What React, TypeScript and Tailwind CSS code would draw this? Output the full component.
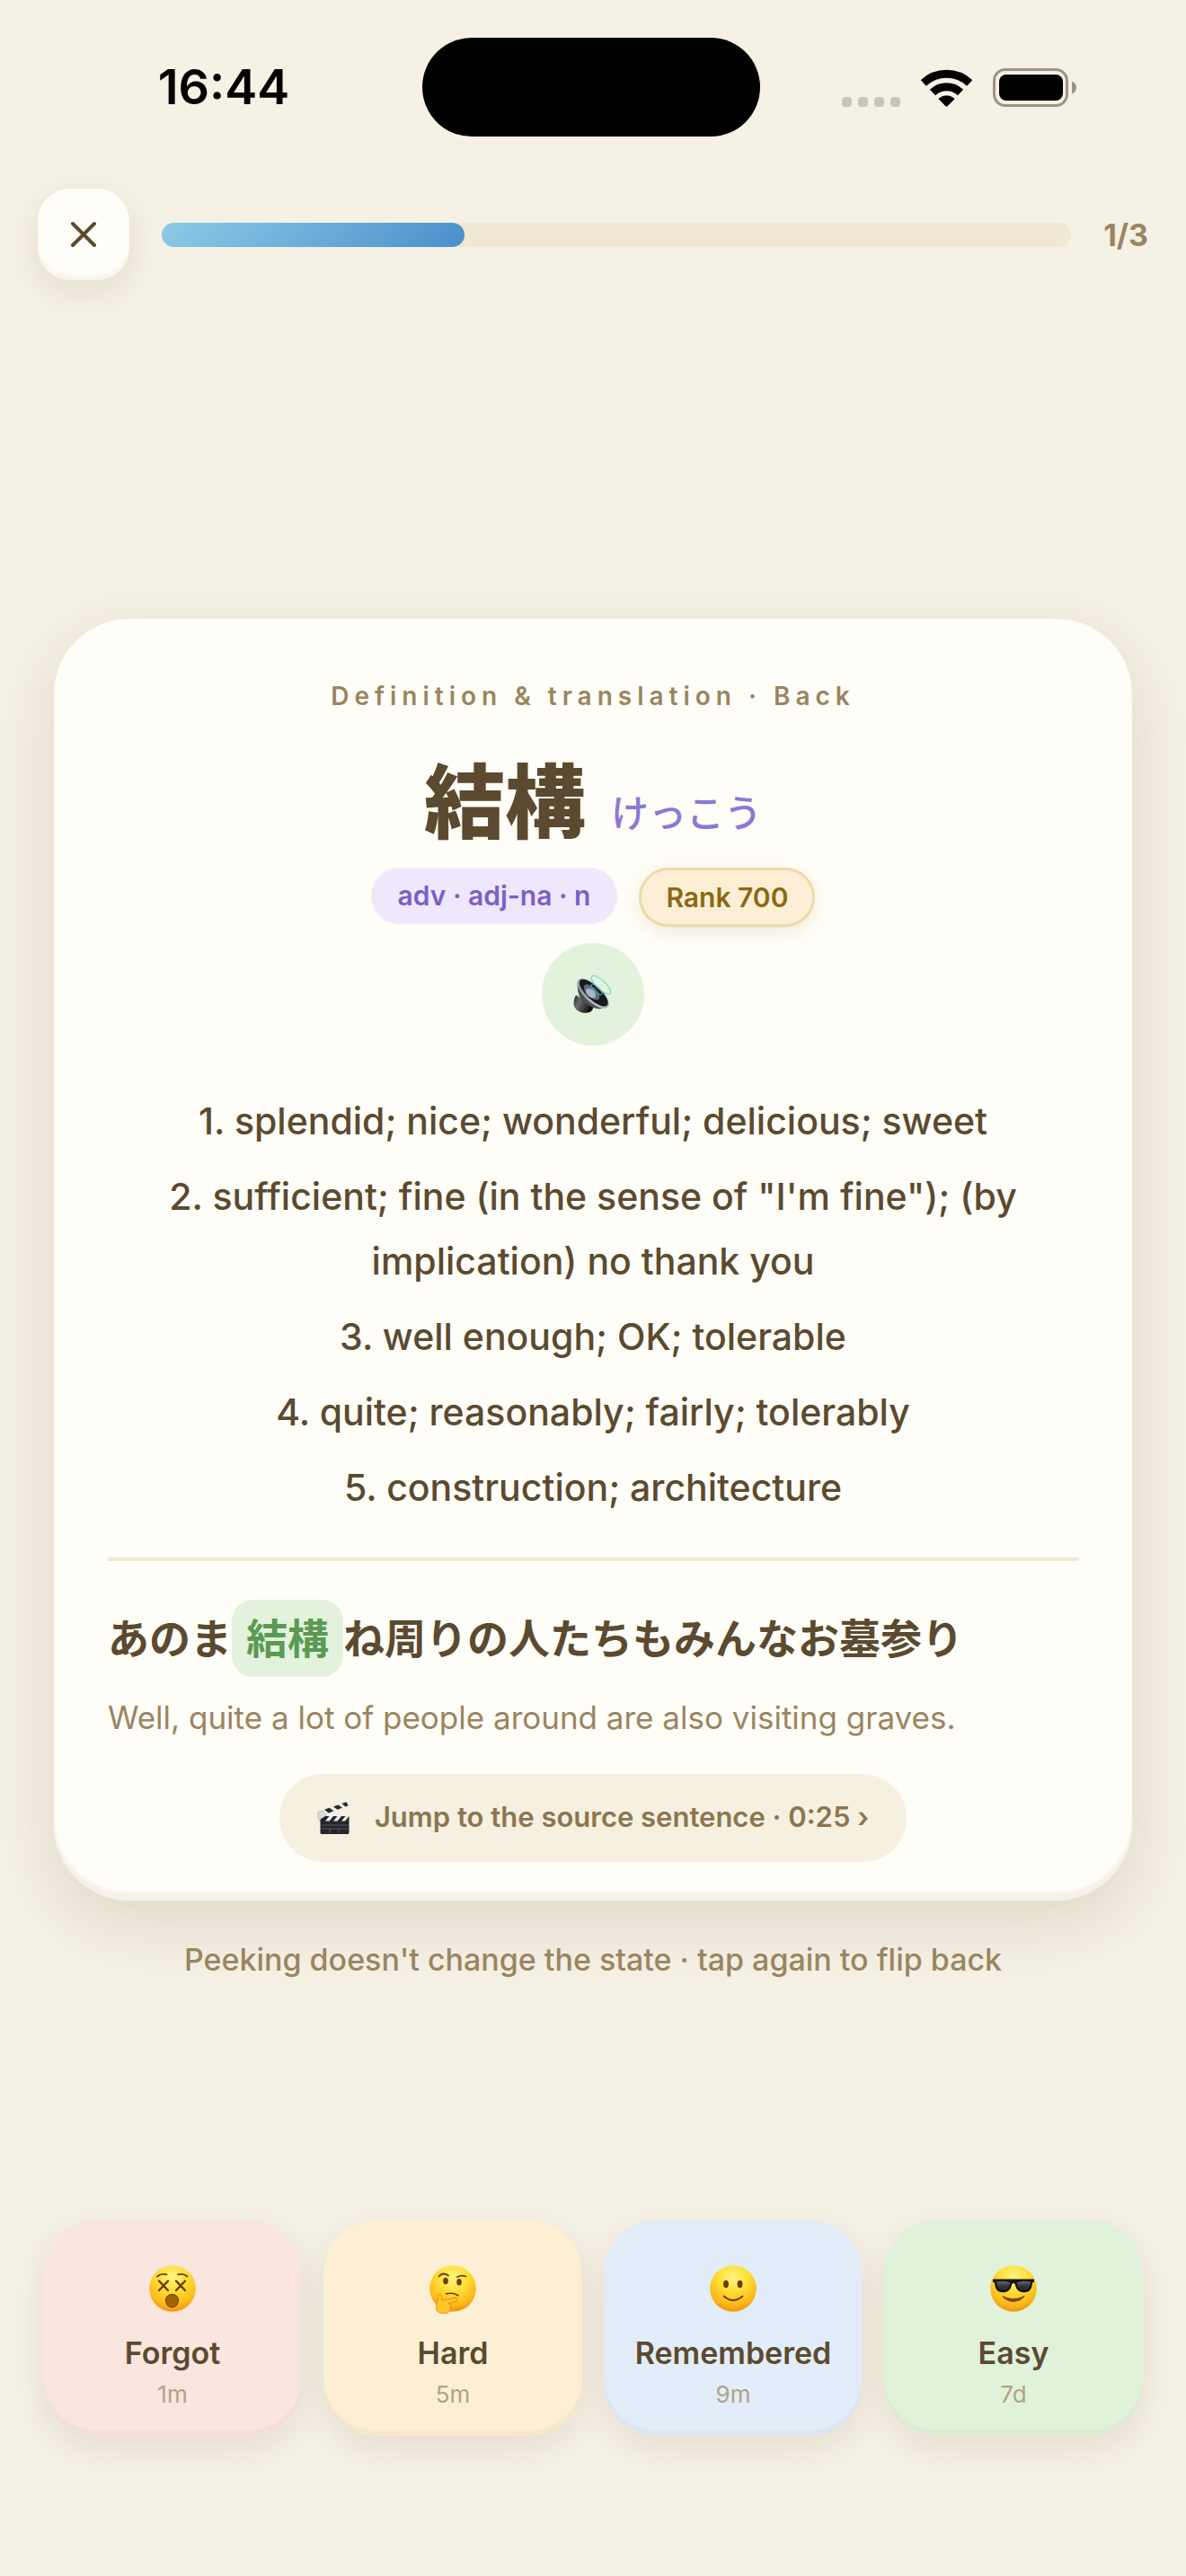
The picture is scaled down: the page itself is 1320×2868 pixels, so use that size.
import React from "react";

const definitions = [
  "splendid; nice; wonderful; delicious; sweet",
  "sufficient; fine (in the sense of \"I'm fine\"); (by implication) no thank you",
  "well enough; OK; tolerable",
  "quite; reasonably; fairly; tolerably",
  "construction; architecture",
];

function FaceBase({ id }: { id: string }) {
  return (
    <>
      <defs>
        <radialGradient id={id} cx="50%" cy="26%" r="76%">
          <stop offset="0" stopColor="#fff487" />
          <stop offset="0.4" stopColor="#ffdf36" />
          <stop offset="0.78" stopColor="#fcb91b" />
          <stop offset="1" stopColor="#ee8f0c" />
        </radialGradient>
      </defs>
      <circle cx="26" cy="26" r="25.8" fill={`url(#${id})`} />
    </>
  );
}

function DizzyFace() {
  return (
    <svg viewBox="0 0 52 52" className="size-13" aria-hidden="true">
      <FaceBase id="dizzy" />
      <g fill="none" stroke="#6b3d06" strokeLinecap="round">
        <path d="M9 12.5Q13 9 19.5 10.3M32 10.3Q38.5 9 42.5 12.5" strokeWidth="1.8" />
        <path d="M11 17.5l10 10.5M21 17.5L11 28M30 17.5l10 10.5M40 17.5L30 28" strokeWidth="2.4" />
      </g>
      <ellipse cx="25.5" cy="39.5" rx="7" ry="7.2" fill="#a06305" stroke="#7a4704" strokeWidth="1.2" />
    </svg>
  );
}

function ThinkingFace() {
  return (
    <svg viewBox="0 0 52 52" className="size-13 overflow-visible" aria-hidden="true">
      <FaceBase id="thinking" />
      <g fill="none" stroke="#6b3d06" strokeLinecap="round">
        <path d="M10.5 12.5Q15 7 21 11.5M31 13.2Q35 10.5 40.5 12.5" strokeWidth="1.8" />
        <path d="M18.5 31.8Q27 30 32 33.8" strokeWidth="1.5" />
      </g>
      <ellipse cx="18" cy="17.5" rx="2.8" ry="3.8" fill="#6b3d06" />
      <ellipse cx="33" cy="18.8" rx="2.8" ry="3.8" fill="#6b3d06" />
      <path
        d="M10 32.5c2-.5 3.4 1 3.5 3l.4 3.5 15-2.6c2.5-.3 3.3 2.7.6 3.600l-8 2.7c2.8.5 3 3 1.8 4.3.6 1.8 0 3.2-1.3 4-.8 2.5-5 2.7-8.5 2.3-4.5-.4-6-3-6-6.5 0-5 2-7.5 1.7-11.3-.1-1.6-.1-2.8.8-3z"
        fill="#ffc62c"
        stroke="#e68b0b"
        strokeWidth="1"
      />
    </svg>
  );
}

function SmileFace() {
  return (
    <svg viewBox="0 0 52 52" className="size-13" aria-hidden="true">
      <FaceBase id="smile" />
      <ellipse cx="18" cy="21" rx="2.9" ry="4.3" fill="#6b3d06" />
      <ellipse cx="33.5" cy="21" rx="2.9" ry="4.3" fill="#6b3d06" />
      <path d="M15.5 34.5Q26 43.5 36.5 34.5" fill="none" stroke="#6b3d06" strokeWidth="1.8" strokeLinecap="round" />
    </svg>
  );
}

function CoolFace() {
  return (
    <svg viewBox="0 0 52 52" className="size-13" aria-hidden="true">
      <FaceBase id="cool" />
      <defs>
        <linearGradient id="lens" x1="0" y1="0" x2="0" y2="1">
          <stop offset="0" stopColor="#6b6b6f" />
          <stop offset="0.5" stopColor="#343437" />
          <stop offset="1" stopColor="#2a2a2d" />
        </linearGradient>
      </defs>
      <path d="M3 15.5h46v3l-2 1c-.5 7-3 10.7-9.5 10.7-6 0-8.5-3.2-9.8-9.2-.7-1.5-2.7-1.5-3.4 0-1.3 6-3.8 9.2-9.8 9.2C8 30.2 5.5 26.5 5 19.5l-2-1z" fill="#111" />
      <path d="M7 18.5c5-1 11-1 15.5 1-1 5.5-3.5 8.5-8.5 8.5-4.8 0-6.5-3.5-7-9.5zM45 18.5c-5-1-11-1-15.5 1 1 5.5 3.5 8.5 8.5 8.5 4.8 0 6.5-3.5 7-9.5z" fill="url(#lens)" />
      <path d="M14 34.3c7.5 4.3 16.500 4.3 24 0-5 8-19 8-24 0z" fill="#7a4704" stroke="#7a4704" strokeWidth="1" strokeLinejoin="round" />
    </svg>
  );
}

function SpeakerIcon() {
  return (
    <svg viewBox="0 0 44 44" className="size-11" aria-hidden="true">
      <defs>
        <linearGradient id="magnet" x1="0" y1="0" x2="1" y2="0.4">
          <stop offset="0" stopColor="#1f2124" />
          <stop offset="0.35" stopColor="#6a6d71" />
          <stop offset="1" stopColor="#0c0d0e" />
        </linearGradient>
        <linearGradient id="rim" x1="0" y1="0" x2="1" y2="1">
          <stop offset="0" stopColor="#d5dbe2" />
          <stop offset="0.5" stopColor="#8e959d" />
          <stop offset="1" stopColor="#c9d0d8" />
        </linearGradient>
      </defs>
      <path d="M3 23c-3 5-3 11-1 14 3 5 11 7 16 5 3-1 4-4 5-7z" fill="url(#magnet)" />
      <path d="M5 7c-1 9 1 17 4 21 5 6 15 11 23 10z" fill="#4b4f54" />
      <g transform="rotate(43 22 21)">
        <ellipse cx="22" cy="21" rx="22.5" ry="9.5" fill="url(#rim)" />
        <ellipse cx="22" cy="20" rx="20.5" ry="7.7" fill="#17191c" />
        <ellipse cx="20" cy="21" rx="11" ry="5.5" fill="#5f6b78" />
        <ellipse cx="20" cy="22.5" rx="6.5" ry="4" fill="#a9b7c6" />
        <ellipse cx="22" cy="15" rx="8" ry="2.8" fill="none" stroke="#4cc4d0" strokeWidth="0.9" />
        <ellipse cx="22" cy="8" rx="14" ry="5" fill="none" stroke="#66d3da" strokeWidth="1" />
      </g>
    </svg>
  );
}

function ClapperIcon() {
  return (
    <svg viewBox="0 0 36 37" className="h-[37px] w-9" aria-hidden="true">
      <path d="M1 12L33.5 1l1.5 4.5L8 16l-5 1z" fill="#e9e9ea" />
      <path d="M8 9.7l5.5-1.900 5 3.5-5.8 2.2zM18 6.3l5.5-1.9 4.5 3.4-5.5 2zM27.500 3l5-1.7 2 4-3 1.2z" fill="#26272a" />
      <path d="M1 12.5l5-1.5 5 6-2 6-5 1-3-5z" fill="#d9dadd" stroke="#a3a5a9" strokeWidth="0.6" />
      <path d="M3.5 20.5L9 17h26.500v18.500a1.500 1.500 0 0 1-1.500 1.500H5a1.500 1.500 0 0 1-1.500-1.500z" fill="#25262a" />
      <path d="M9 22.5l4.500-5.500h4.500l-4.500 5.500zM18 22.500l4.500-5.500H27l-4.500 5.500zM27 22.500l4.500-5.500h4l-4.500 5.500z" fill="#ececee" />
      <path d="M4.500 27h30M4.500 31h30M14 31v5M24 31v5" stroke="#6d6e72" strokeWidth="0.7" />
    </svg>
  );
}

const ratings: Array<{ label: string; interval: string; face: React.ElementType; bg: string }> = [
  { label: "Forgot", interval: "1m", face: DizzyFace, bg: "bg-[#fae5df]" },
  { label: "Hard", interval: "5m", face: ThinkingFace, bg: "bg-[#fdefd3]" },
  { label: "Remembered", interval: "9m", face: SmileFace, bg: "bg-[#e2edf9]" },
  { label: "Easy", interval: "7d", face: CoolFace, bg: "bg-[#e1f2db]" },
];

function StatusBar() {
  return (
    <div className="flex items-center pt-[42px] text-black">
      <div className="flex-1 pl-7 text-center text-[54px] leading-none font-semibold">16:44</div>
      <div className="h-[110px] w-[376px] rounded-full bg-black" />
      <div className="flex flex-1 items-end justify-center gap-[23px] pr-8">
        <div className="flex gap-[7px]">
          {[0, 1, 2, 3].map((dot) => (
            <span key={dot} className="size-[11px] rounded-[4px] bg-[#c8c4b8]" />
          ))}
        </div>
        <svg viewBox="0 0 57 42" className="h-[42px] w-[57px]" aria-hidden="true">
          <g fill="none" stroke="black" strokeWidth="9">
            <path d="M2.8 15.5A37.5 37.5 0 0 1 54.2 15.5" />
            <path d="M13 26A22.5 22.5 0 0 1 44 26" />
          </g>
          <path d="M27.5 41.2L19.8 33.4Q19.5 32.5 20.5 32A13 13 0 0 1 36.5 32Q37.5 32.5 37.2 33.4L29.5 41.2Q28.5 42 27.5 41.2Z" />
        </svg>
        <svg viewBox="0 0 93 43" className="h-[43px] w-[93px]" aria-hidden="true">
          <rect x="1.5" y="1.5" width="81" height="40" rx="12.5" fill="none" stroke="#999586" strokeWidth="3" />
          <rect x="7" y="7" width="71" height="29" rx="8" fill="black" />
          <path d="M88 14.5Q93 16.5 93 21.5Q93 26.5 88 28.5Z" fill="#999586" />
        </svg>
      </div>
    </div>
  );
}

export default function App() {
  return (
    <div className="flex min-h-screen flex-col bg-[#f5f1e5] pb-39 font-['Inter','Noto_Sans_CJK_JP',sans-serif] text-[#5b4a2f]">
      <StatusBar />

      {/* Session progress */}
      <header className="mt-[58px] flex items-center gap-9 px-[42px]">
        <button
          type="button"
          aria-label="Close"
          className="flex size-[102px] items-center justify-center rounded-[36px] bg-[#fffdf7] shadow-[0_12px_36px_rgba(139,115,85,0.15),inset_0_-6px_3px_rgba(139,115,85,0.05)]"
        >
          <svg viewBox="0 0 30 30" className="size-[30px]" fill="none" stroke="currentColor" strokeWidth="4" strokeLinecap="round" aria-hidden="true">
            <path d="M3 3l24 24M27 3L3 27" />
          </svg>
        </button>
        <div role="progressbar" aria-label="Progress" aria-valuenow={1} aria-valuemin={0} aria-valuemax={3} className="h-[27px] flex-1 rounded-full bg-[#f0e8d3]">
          <div className="h-full w-1/3 rounded-full bg-linear-135 from-[#8ecae6] to-[#4a8fcb]" />
        </div>
        <span className="text-[34px] font-bold text-[#9a8560]">1/3</span>
      </header>

      <main className="flex flex-1 flex-col items-stretch justify-center px-15 pt-27">
        <article className="flex flex-col items-center rounded-[84px] bg-[#fffdf7] px-15 pt-17 pb-[43px] shadow-[0_24px_72px_rgba(139,115,85,0.2),inset_0_-9px_3px_rgba(139,115,85,0.08)]">
          <p className="text-[28px] leading-9 font-semibold tracking-[6px] text-[#9a8560]">Definition &amp; translation · Back</p>

          <h1 className="mt-14 flex items-end gap-7">
            <span className="text-[90px] leading-none font-black">結構</span>
            <span className="text-[42px] leading-[66px] font-medium text-[#8b78d6]">けっこう</span>
          </h1>

          <div className="mt-[27px] flex items-start gap-6">
            <span className="rounded-full bg-[#efe7fc] px-[30px] py-3 text-[30px] leading-[39px] font-semibold text-[#7b5fc6]">adv · adj-na · n</span>
            <span className="rounded-full border-3 border-[#f0d9a8] bg-[#fdefd5] px-[27px] py-3 text-[30px] leading-9 font-semibold text-[#8b6914] shadow-[0_6px_18px_rgba(139,105,20,0.12)]">Rank 700</span>
          </div>

          <button type="button" aria-label="Play pronunciation" className="mt-[18px] flex size-[114px] items-center justify-center rounded-full bg-[#e2f2dd]">
            <SpeakerIcon />
          </button>

          <ol className="mt-12 flex flex-col gap-3 text-center text-[41px] leading-[72px] font-medium">
            {definitions.map((definition, i) => (
              <li key={definition} className="px-15">
                {i + 1}. {definition}
              </li>
            ))}
          </ol>

          <div className="mt-[42px] flex w-full flex-col border-t-4 border-[#efe8d6] pt-[43px]">
            <p lang="ja" className="text-[46px] leading-[86px] font-bold">
              あのま
              <mark className="rounded-3xl bg-[#e2f2dd] px-4 py-[15px] text-[#5b9a52]">結構</mark>
              ね周りの人たちもみんなお墓参り
            </p>
            <p className="mt-5 text-[35px] leading-[50px] text-[#9a8560]">Well, quite a lot of people around are also visiting graves.</p>
            <button type="button" className="mt-[38px] flex h-[98px] items-center gap-7 self-center rounded-full bg-[#f6f0e1] px-[42px] text-[31px] font-semibold text-[#8b7650]">
              <ClapperIcon />
              <span>Jump to the source sentence · 0:25 ›</span>
            </button>
          </div>
        </article>

        <p className="mt-11 text-center text-[34px] leading-[44px] font-medium text-[#9a8560]">Peeking doesn't change the state · tap again to flip back</p>
      </main>

      {/* Recall rating */}
      <div className="grid grid-cols-4 gap-6 px-12">
        {ratings.map((rating) => (
          <button
            key={rating.label}
            type="button"
            className={`flex flex-col items-center rounded-[60px] pt-[50px] pb-7 shadow-[0_12px_36px_rgba(139,115,85,0.15),inset_0_-6px_0_rgba(139,115,85,0.05)] ${rating.bg}`}
          >
            <rating.face />
            <span className="mt-[22px] text-[34px] leading-[48px] font-semibold">{rating.label}</span>
            <span className="mt-1 text-[26px] leading-9 text-[#b0a286]">{rating.interval}</span>
          </button>
        ))}
      </div>
    </div>
  );
}
